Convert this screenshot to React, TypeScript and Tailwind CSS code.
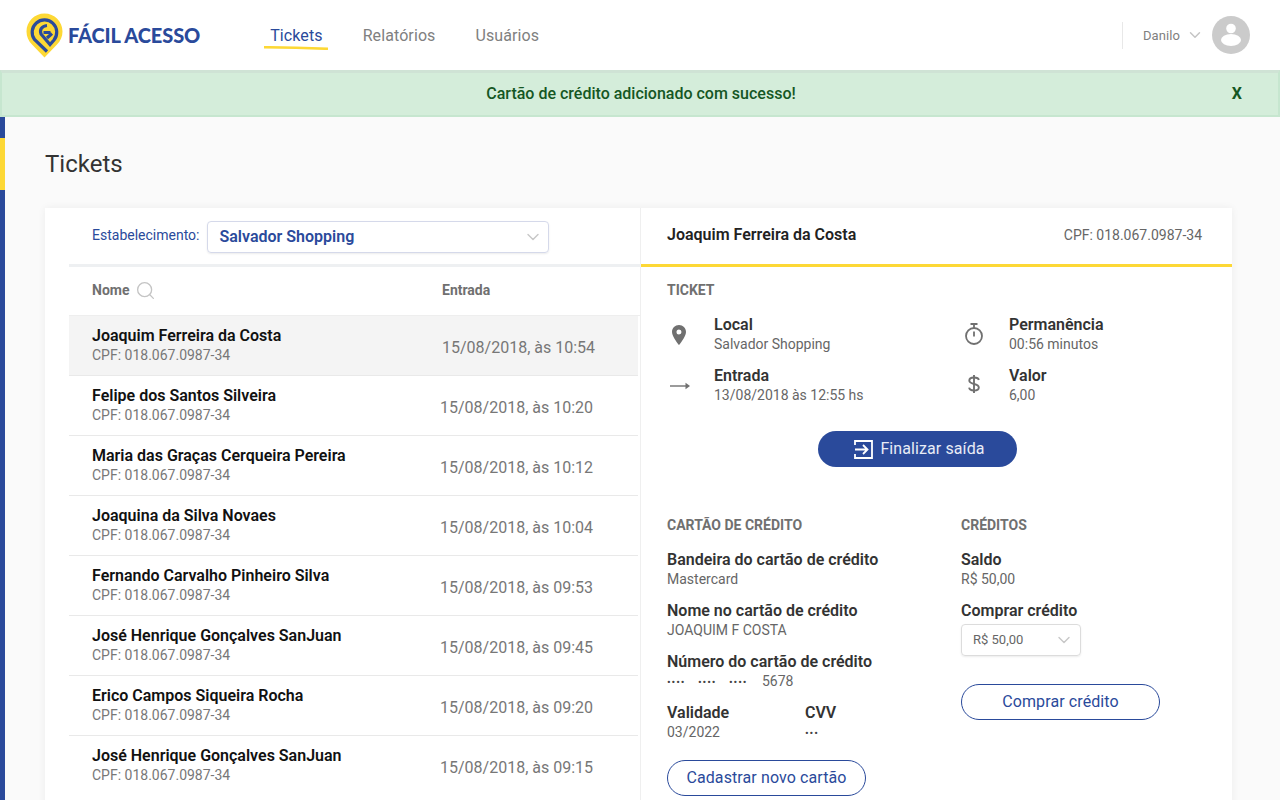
import { ChevronDown, Search } from "lucide-react";

const tickets = [
  { name: "Joaquim Ferreira da Costa", date: "15/08/2018, às 10:54" },
  { name: "Felipe dos Santos Silveira", date: "15/08/2018, às 10:20" },
  { name: "Maria das Graças Cerqueira Pereira", date: "15/08/2018, às 10:12" },
  { name: "Joaquina da Silva Novaes", date: "15/08/2018, às 10:04" },
  { name: "Fernando Carvalho Pinheiro Silva", date: "15/08/2018, às 09:53" },
  { name: "José Henrique Gonçalves SanJuan", date: "15/08/2018, às 09:45" },
  { name: "Erico Campos Siqueira Rocha", date: "15/08/2018, às 09:20" },
  { name: "José Henrique Gonçalves SanJuan", date: "15/08/2018, às 09:15" },
];

function Logo() {
  return (
    <div className="flex items-center gap-[4px]">
      <svg width="38" height="45" viewBox="0 0 38 45">
        <path
          d="M18.500 .5C8.500 .5 .5 8.500 .5 18.500c0 5 2 9.500 5.500 13L18.500 44.500 31 31.500c3.500-3.500 5.500-8 5.500-13C36.500 8.500 28.500 .5 18.500 .5z"
          fill="#fdd835"
        />
        <path
          d="M21 38.500 8.500 26.500A12.300 12.300 0 1 1 28 27L24 31.500 15 21C13.500 17 15.500 13 21 12.500M17.500 19.500H24.500M21 25 26 20.500"
          fill="none"
          stroke="#2a4a9b"
          strokeWidth="3.200"
        />
      </svg>
      <span className="font-['Lato'] text-[20px] leading-none font-black tracking-[-0.1px] text-[#2a4a9b]">FÁCIL ACESSO</span>
    </div>
  );
}

function Header() {
  return (
    <header className="flex h-[70px] shrink-0 items-center bg-white pr-[30px] pl-[26px]">
      <Logo />
      <nav className="mt-[2px] ml-[70px] flex gap-[40px] text-base tracking-[0.1px]">
        <a className="relative text-[#2a4a9b]">
          Tickets
          <svg width="64" height="4" viewBox="0 0 64 4" className="absolute top-[22px] left-[-6px]">
            <path d="M0 1.200 32 1.800 64 2.800" stroke="#fdd835" strokeWidth="2.600" fill="none" />
          </svg>
        </a>
        <a className="text-[#808080]">Relatórios</a>
        <a className="text-[#808080]">Usuários</a>
      </nav>
      <div className="ml-auto flex items-center">
        <div className="h-[27px] w-px bg-[#e8e8e8]" />
        <span className="mt-[2px] ml-[20px] text-[13px] tracking-[0.1px] text-[#808080]">Danilo</span>
        <ChevronDown className="ml-[6px] text-[#c4c4c4]" size={18} strokeWidth={1.900} />
        <svg width="38" height="38" viewBox="0 0 38 38" className="ml-[8px]">
          <circle cx="19" cy="19" r="19" fill="#cbcbcb" />
          <circle cx="19" cy="12.500" r="4.800" fill="#fff" />
          <ellipse cx="19" cy="24" rx="10" ry="6" fill="#fff" />
        </svg>
      </div>
    </header>
  );
}

function Field({ label, value, className }: { label: string; value: React.ReactNode; className?: string }) {
  return (
    <div className={className}>
      <div className="text-base leading-5 font-semibold text-[#333]">{label}</div>
      <div className="h-[19px] text-sm leading-[19px] text-[#666]">{value}</div>
    </div>
  );
}

function SectionTitle({ children }: { children: React.ReactNode }) {
  return <h3 className="text-sm leading-4 font-bold text-[#707070] uppercase">{children}</h3>;
}

function OutlineButton({ children }: { children: React.ReactNode }) {
  return (
    <button
      type="button"
      className="flex h-9 w-[199px] items-center justify-center rounded-full border border-[#2a4a9b] text-base tracking-[0.1px] text-[#2a4a9b]"
    >
      {children}
    </button>
  );
}

function Dots({ count }: { count: number }) {
  return <span className="text-[11px] tracking-[0.9px] text-[#444]">{"•".repeat(count)}</span>;
}

function TicketList() {
  return (
    <section className="w-[596px] shrink-0 border-r border-[#efefef] pb-[30px] pl-[24px]">
      <div className="flex h-[56px] items-center pt-[1px] pl-[23px]">
        <span className="mb-[4px] text-sm text-[#2a4a9b]">Estabelecimento:</span>
        <div className="ml-[8px] flex h-[32px] w-[342px] items-center justify-between rounded border border-[#d5d9ea] pr-[5px] pl-[11px] shadow-[0_1px_2px_rgba(0,0,0,0.08)]">
          <span className="text-base font-semibold text-[#2a4a9b]">Salvador Shopping</span>
          <ChevronDown className="text-[#c8c8c8]" size={20} strokeWidth={1.700} />
        </div>
      </div>
      <div className="h-[3px] bg-[#eef0f2]" />
      <div className="flex h-[49px] items-center border-b border-[#eee] pb-[2px] pl-[23px] text-sm font-bold text-[#707070]">
        <div className="flex w-[350px] items-center">
          <span>Nome</span>
          <Search className="ml-[6px] text-[#c4c4c4]" size={21} strokeWidth={1.500} />
        </div>
        <span>Entrada</span>
      </div>
      {tickets.map((t, i) => (
        <div
          key={t.name + i}
          className={`mr-[2px] flex h-[60px] items-center border-b pl-[23px] ${i === 0 ? "bg-[#f4f4f4]" : ""} ${i < tickets.length - 1 ? "border-[#e9e9e9]" : "border-transparent"}`}
        >
          <div className="w-[348px] shrink-0">
            <div className="text-base leading-5 font-semibold text-[#111]">{t.name}</div>
            <div className="text-sm leading-[19px] text-[#777]">CPF: 018.067.0987-34</div>
          </div>
          <span className={`mt-[5px] text-base text-[#777] ${i === 0 ? "ml-[2px]" : ""}`}>{t.date}</span>
        </div>
      ))}
    </section>
  );
}

function PinIcon() {
  return (
    <svg width="14" height="20" viewBox="0 0 14 20">
      <path
        fillRule="evenodd"
        d="M7 0C3.100 0 0 3.100 0 7c0 4.800 7 13 7 13s7-8.200 7-13c0-3.900-3.100-7-7-7zm0 9.500A2.500 2.500 0 1 1 7 4.500a2.500 2.500 0 0 1 0 5z"
        fill="#707070"
      />
    </svg>
  );
}

function ArrowIcon() {
  return (
    <svg width="20" height="8" viewBox="0 0 20 8">
      <path d="M0 4H16" stroke="#707070" strokeWidth="1.400" />
      <path d="M15.500 .8 20 4 15.500 7.200z" fill="#707070" />
    </svg>
  );
}

function TimerIcon() {
  return (
    <svg width="20" height="22" viewBox="0 0 20 22" fill="none" stroke="#707070" strokeWidth="1.800">
      <path d="M6.500 1H13.500M10 1V5" />
      <circle cx="10" cy="13" r="8" />
      <path d="M10 8.500V13.500" />
    </svg>
  );
}

function DollarIcon() {
  return (
    <svg width="12" height="18" viewBox="0 0 12 18" fill="none" stroke="#707070" strokeWidth="1.900">
      <path d="M6 0V18" />
      <path d="M10.800 5C10.500 3.200 8.500 2.500 6 2.500 3.300 2.500 1.300 3.600 1.300 5.600 1.300 7.800 3.500 8.400 6 9 8.600 9.600 10.800 10.300 10.800 12.500 10.800 14.500 8.800 15.500 6 15.500 3.300 15.500 1.400 14.600 1.100 12.700" />
    </svg>
  );
}

function ExitIcon() {
  return (
    <svg width="19" height="19" viewBox="0 0 19 19" fill="none" stroke="#fff" strokeWidth="1.800">
      <path d="M1 5V1H18V18H1V14" />
      <path d="M1 9.500H13M9 5l4.500 4.500L9 14" />
    </svg>
  );
}

function Details() {
  return (
    <section className="flex-1">
      <div className="flex h-[56px] items-center justify-between pr-[30px] pb-[2px] pl-[26px]">
        <span className="text-base font-semibold text-[#222]">Joaquim Ferreira da Costa</span>
        <span className="text-sm text-[#666]">CPF: 018.067.0987-34</span>
      </div>
      <div className="h-[3px] bg-[#fdd835]" />
      <div className="px-[26px] pt-[15px]">
        <SectionTitle>Ticket</SectionTitle>
        <div className="mt-[17px] grid grid-cols-[295px_1fr] gap-y-[12px]">
          <div className="flex items-center">
            <div className="flex w-[47px] justify-start pl-[5px]"><PinIcon /></div>
            <Field label="Local" value="Salvador Shopping" />
          </div>
          <div className="flex items-center">
            <div className="flex w-[47px] pb-[1px] pl-[2px]"><TimerIcon /></div>
            <Field label="Permanência" value="00:56 minutos" />
          </div>
          <div className="flex items-center">
            <div className="flex w-[47px] pl-[3px]"><ArrowIcon /></div>
            <Field label="Entrada" value="13/08/2018 às 12:55 hs" />
          </div>
          <div className="flex items-center">
            <div className="flex w-[47px] pb-[4px] pl-[6px]"><DollarIcon /></div>
            <Field label="Valor" value="6,00" />
          </div>
        </div>
        <button
          type="button"
          className="mt-[26px] ml-[151px] flex h-9 w-[199px] items-center justify-center gap-[7px] rounded-full bg-[#2a4a9b] pl-[4px] text-base tracking-[0.1px] text-[#e8ecf6]"
        >
          <ExitIcon />
          Finalizar saída
        </button>
        <div className="mt-[50px] grid grid-cols-[294px_1fr]">
          <div>
            <SectionTitle>Cartão de crédito</SectionTitle>
            <div className="mt-[17px] flex flex-col gap-[12px]">
              <Field label="Bandeira do cartão de crédito" value="Mastercard" />
              <Field label="Nome no cartão de crédito" value="JOAQUIM F COSTA" />
              <Field
                label="Número do cartão de crédito"
                value={
                  <span className="flex h-[19px] items-center">
                    <span className="h-[19px] w-[31px]"><Dots count={4} /></span>
                    <span className="h-[19px] w-[31px]"><Dots count={4} /></span>
                    <span className="h-[19px] w-[33px]"><Dots count={4} /></span>
                    5678
                  </span>
                }
              />
              <div className="flex">
                <Field label="Validade" value="03/2022" className="w-[138px]" />
                <Field label="CVV" value={<Dots count={3} />} />
              </div>
            </div>
            <div className="mt-[18px]">
              <OutlineButton>Cadastrar novo cartão</OutlineButton>
            </div>
          </div>
          <div>
            <SectionTitle>Créditos</SectionTitle>
            <div className="mt-[17px] flex flex-col gap-[12px]">
              <Field label="Saldo" value="R$ 50,00" />
              <div className="text-base leading-5 font-semibold text-[#333]">Comprar crédito</div>
            </div>
            <div className="mt-[3px] flex h-[32px] w-[120px] items-center justify-between rounded border border-[#dcdcdc] pr-[6px] pl-[11px] text-[13px] text-[#666] shadow-[0_1px_2px_rgba(0,0,0,0.08)]">
              R$ 50,00
              <ChevronDown className="text-[#c8c8c8]" size={20} strokeWidth={1.700} />
            </div>
            <div className="mt-[28px]">
              <OutlineButton>Comprar crédito</OutlineButton>
            </div>
          </div>
        </div>
      </div>
    </section>
  );
}

export default function App() {
  return (
    <div className="flex h-screen flex-col overflow-hidden bg-[#fafafa] font-['Roboto',sans-serif]">
      <Header />
      <div className="relative flex h-[47px] shrink-0 items-center justify-center border-2 border-t-[3px] border-[#c6e6cf] border-t-[#cfe3d5] bg-[#d4edda] pl-[2px] font-medium text-[#155724]">
        <span className="text-base">Cartão de crédito adicionado com sucesso!</span>
        <span className="absolute right-[36px] text-base font-bold">X</span>
      </div>
      <div className="flex min-h-0 flex-1">
        <aside className="flex w-[5px] shrink-0 flex-col bg-[#2a4a9b]">
          <div className="mt-[21px] h-[52px] bg-[#fdd835]" />
        </aside>
        <main className="flex-1 pt-[32px] pl-[40px]">
          <h1 className="text-2xl leading-[30px] text-[#333]">Tickets</h1>
          <div className="mt-[29px] flex w-[1187px] bg-white shadow-[0_0_8px_rgba(0,0,0,0.06)]">
            <TicketList />
            <Details />
          </div>
        </main>
      </div>
    </div>
  );
}
